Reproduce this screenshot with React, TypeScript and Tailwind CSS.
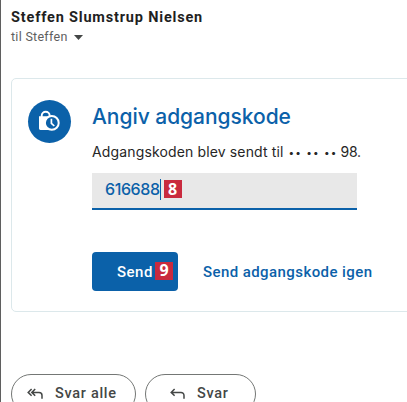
import type { ReactNode } from "react";

function StepBadge({ children }: { children: ReactNode }) {
  return (
    <span className="flex h-[18px] w-[18px] shrink-0 items-center justify-center bg-[#c92a3e] pb-px font-['Open_Sans',sans-serif] text-[16px] font-bold leading-none tracking-normal text-white">
      {children}
    </span>
  );
}

function LockClockIcon() {
  return (
    <svg width="43" height="43" viewBox="0 0 43 43" fill="none">
      <path d="M13.7 17v-1.2a4 4 0 0 1 8 0V17" stroke="#fff" strokeWidth="1.9" />
      <path d="M11 16.2h13.5V30H12.4a1.4 1.4 0 0 1-1.4-1.4z" fill="#fff" />
      <circle cx="23.8" cy="22.9" r="6.9" fill="#0b61a9" stroke="#fff" strokeWidth="2" />
      <path d="M23.4 18.8v4.5l2.9 2.7" stroke="#fff" strokeWidth="1.7" />
    </svg>
  );
}

function ReplyIcon() {
  return (
    <svg width="15" height="12" viewBox="0 0 15 12" fill="none" stroke="#444746" strokeWidth="1.5">
      <path d="M4.6 1 1.2 4.4l3.4 3.4M1.4 4.4H11a3 3 0 0 1 3 3v3.4" />
    </svg>
  );
}

function ReplyAllIcon() {
  return (
    <svg width="16" height="12" viewBox="0 0 16 12" fill="none" stroke="#444746" strokeWidth="1.5">
      <path d="M4.6 1 1.2 4.4l3.4 3.4M8.2 1 4.8 4.4l3.4 3.4M5 4.4h7a3 3 0 0 1 3 3v3.4" />
    </svg>
  );
}

export default function App() {
  return (
    <main className="h-[402px] w-full overflow-hidden border-l border-[#5f5f5f] bg-white pl-2.5 font-['Roboto',sans-serif]">
      {/* Afsender */}
      <header className="h-[78px] pt-2">
        <h1 className="whitespace-nowrap text-[14.5px] font-bold leading-5 tracking-[0.82px] text-[#1f1f1f]">
          Steffen Slumstrup Nielsen
        </h1>
        <div className="mt-px flex items-center text-[12.5px] leading-4 tracking-[0.28px] text-[#5e5e5e]">
          til Steffen
          <svg className="ml-[6px]" width="9" height="5" viewBox="0 0 9 5" fill="#444746">
            <path d="M0 0h9L4.5 5z" />
          </svg>
        </div>
      </header>

      {/* Adgangskode */}
      <section className="flex h-[234px] w-[420px] rounded-[5px] border border-[#dce8eb] pl-4 pt-[21px] font-['Inter',sans-serif]">
        <div className="h-[43px] w-[43px] shrink-0 rounded-full bg-[#0b61a9]">
          <LockClockIcon />
        </div>
        <div className="ml-[21px] pt-1">
          <h2 className="whitespace-nowrap text-[21px] font-medium leading-[26px] tracking-[-0.04px] text-[#0b61a9]">
            Angiv adgangskode
          </h2>
          <p className="mt-3 flex whitespace-nowrap text-[14px] leading-5 tracking-[0.14px] text-[#262626]">
            <span>Adgangskoden blev sendt til</span>
            <span className="ml-[5px] w-[52px] text-[10px] tracking-[1.1px] [word-spacing:0.4px]">•• •• ••</span>
            <span className="tracking-[-0.3px]">98.</span>
          </p>
          <div className="mt-[11px] flex h-[37px] w-[265px] items-center border-b-2 border-[#0b61a9] bg-[#e8e8e8] pb-[3px] pl-[13px] text-[16px] font-medium text-[#0b61a9]">
            <span className="tracking-[-0.4px]">616688</span>
            <span className="h-[21px] w-px bg-[#0b61a9]" />
            <span className="ml-[3px]">
              <StepBadge>8</StepBadge>
            </span>
          </div>
          <div className="mt-[42px] flex items-center font-['Roboto',sans-serif] text-[15px] font-medium">
            <button className="flex h-[39px] w-[86px] items-center rounded bg-[#0b61a9] pb-0.5 pl-[25px] text-white">
              <span className="w-[38px] pt-[3px] text-left tracking-[0.5px]">Send</span>
              <StepBadge>9</StepBadge>
            </button>
            <a className="ml-[25px] whitespace-nowrap pt-px tracking-[0.42px] text-[#0b61a9]">
              Send adgangskode igen
            </a>
          </div>
        </div>
      </section>

      {/* Svarknapper */}
      <footer className="mt-[62px] flex gap-[9px] text-[14.5px] font-medium tracking-[0.7px] text-[#444746]">
        <button className="flex h-10 w-[125px] shrink-0 items-center rounded-full border border-[#747775] pl-[15px]">
          <ReplyAllIcon />
          <span className="ml-3">Svar alle</span>
        </button>
        <button className="flex h-10 w-[111px] shrink-0 items-center rounded-full border border-[#747775] pl-6">
          <ReplyIcon />
          <span className="ml-3">Svar</span>
        </button>
      </footer>
    </main>
  );
}
